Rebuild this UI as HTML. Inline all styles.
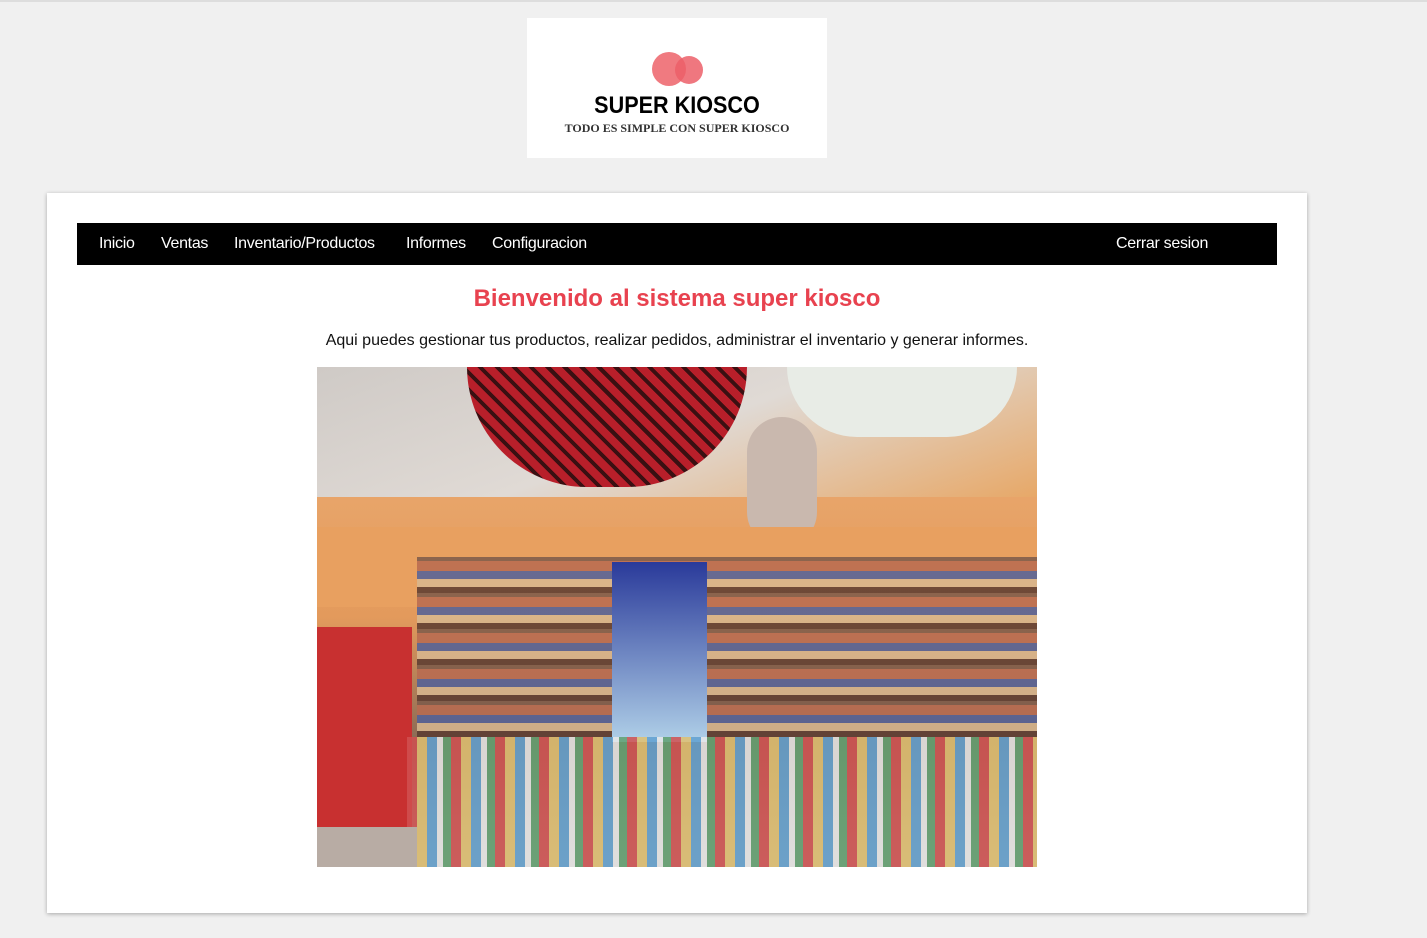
<!DOCTYPE html>
<html><head><meta charset="utf-8"><style>
*{margin:0;padding:0;box-sizing:border-box}
body{width:1427px;height:938px;background:#f0f0f0;font-family:"Liberation Sans",Arial,sans-serif;position:relative;overflow:hidden}
.topline{position:absolute;left:0;top:0;width:1427px;height:2px;background:#ddd}
.logo{position:absolute;left:527px;top:18px;width:300px;height:140px;background:#fff;text-align:center}
.card{position:absolute;left:47px;top:193px;width:1260px;height:720px;background:#fff;box-shadow:0 1px 4px rgba(0,0,0,.3)}
.nav{position:absolute;left:30px;top:30px;width:1200px;height:42px;background:#000;color:#fff;font-size:16px;letter-spacing:-0.3px}
.nav span{position:absolute;top:12px}
h1{position:absolute;left:0;width:1260px;top:92px;text-align:center;color:#e8424f;font-size:24px;font-weight:bold}
p{position:absolute;left:0;width:1260px;top:139px;text-align:center;font-size:16px;color:#111}
.img{position:absolute;left:270px;top:174px;width:720px;height:500px;overflow:hidden;background:linear-gradient(180deg,#d9d4cf 0%,#e8a56a 25%,#e39a5c 50%,#8a6a55 75%,#b0a8a0 100%)}
.img div{position:absolute}
</style></head><body>
<div class="topline"></div>
<div class="logo">
<svg width="300" height="140" style="position:absolute;left:0;top:0"><circle cx="142" cy="51" r="17" fill="#f07a80"/><circle cx="162" cy="52" r="14" fill="#ec5f69" opacity=".85"/></svg>
<div style="position:absolute;left:0;width:300px;top:74px;font:bold 24px 'Liberation Sans',sans-serif;transform:scaleX(.9)">SUPER KIOSCO</div>
<div style="position:absolute;left:0;width:300px;top:103px;font:bold 12px 'Liberation Serif',serif;color:#333">TODO ES SIMPLE CON SUPER KIOSCO</div>
</div>
<div class="card">
<div class="nav"><span style="left:22px">Inicio</span><span style="left:84px">Ventas</span><span style="left:157px">Inventario/Productos</span><span style="left:329px">Informes</span><span style="left:415px">Configuracion</span><span style="left:1039px">Cerrar sesion</span></div>
<h1>Bienvenido al sistema super kiosco</h1>
<p>Aqui puedes gestionar tus productos, realizar pedidos, administrar el inventario y generar informes.</p>
<div class="img">
<div style="left:0;top:0;width:720px;height:130px;background:linear-gradient(160deg,#cfcac6,#e0dad5 50%,#e7a868)"></div>
<div style="left:150px;top:0;width:280px;height:120px;border-radius:0 0 140px 140px;background:repeating-linear-gradient(45deg,#b81f2a 0 8px,#3a1012 8px 12px)"></div>
<div style="left:470px;top:0;width:230px;height:70px;border-radius:0 0 120px 120px;background:#e8ece6"></div>
<div style="left:430px;top:50px;width:70px;height:130px;border-radius:40px;background:#c9b8ae"></div>
<div style="left:0;top:160px;width:720px;height:80px;background:#e8a060"></div>
<div style="left:100px;top:190px;width:620px;height:180px;background:repeating-linear-gradient(180deg,#7c5a4a 0 4px,#b86a50 4px 14px,#50609a 14px 22px,#d8b890 22px 30px,#5a3a30 30px 36px);opacity:.85"></div>
<div style="left:0;top:260px;width:95px;height:200px;background:#c83030"></div>
<div style="left:295px;top:195px;width:95px;height:180px;background:linear-gradient(#2a3a9a,#b0d0e8)"></div>
<div style="left:90px;top:370px;width:630px;height:130px;background:repeating-linear-gradient(90deg,#d05050 0 10px,#e0c070 10px 20px,#60a0d0 20px 30px,#e8e8e8 30px 36px,#60a070 36px 44px);opacity:.85"></div>
<div style="left:0;top:460px;width:100px;height:40px;background:#b8aca4"></div>
</div>
</div>
</body></html>
